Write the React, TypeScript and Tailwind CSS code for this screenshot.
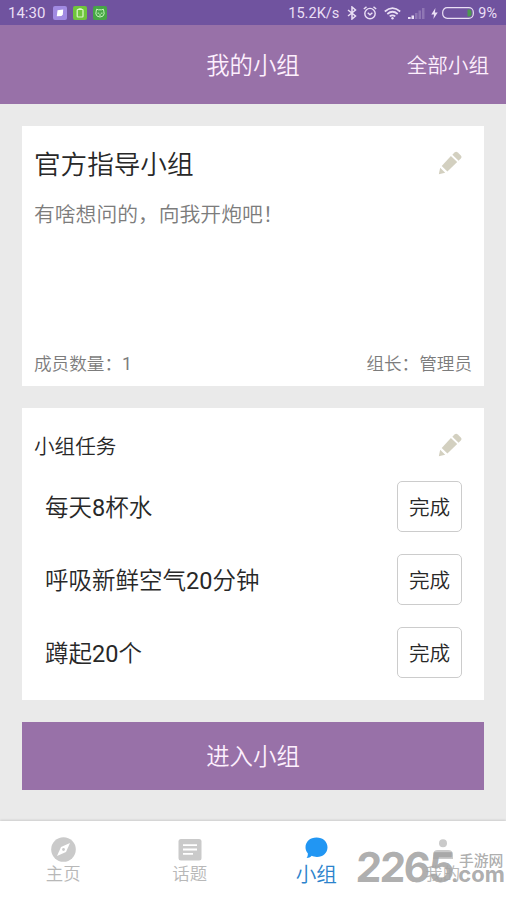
import type { ReactNode } from 'react';

const tasks = ['每天8杯水', '呼吸新鲜空气20分钟', '蹲起20个'];

// Digits use Roboto, the rest stays in the CJK face
function MixedText({ text }: { text: string }) {
  return (
    <>
      {text.split(/(\d+)/).map((part, index) =>
        /^\d+$/.test(part) ? (
          <span key={index} className="font-[Roboto,sans-serif] font-normal">
            {part}
          </span>
        ) : (
          part
        )
      )}
    </>
  );
}

function PencilIcon() {
  return (
    <svg className="h-6 w-6" viewBox="0 0 24 24" fill="#d3d0c0">
      <path d="M.8 23.2L2.2 16.8L7.2 21.8Z" />
      <path d="M3.7 14.9L12.9 5L19.2 11L9.4 20.6Z" />
      <path d="M14.4 3.7L16.7 1.3Q18.3 0 19.8 1.4L22.8 4.4Q24.2 6 22.8 7.5L20.6 9.7Z" />
    </svg>
  );
}

function StatusBar() {
  return (
    <div className="flex h-[25px] shrink-0 items-center bg-[#70539f] pl-2 pr-[9px] pt-px font-[Roboto,'Noto_Sans',sans-serif] text-[15px] font-normal text-[#eadff5]">
      <span className="w-[45px] whitespace-nowrap">14:30</span>
      <div className="flex gap-[6px]">
        <svg className="h-[14px] w-[14px]" viewBox="0 0 14 14">
          <rect width="14" height="14" rx="2" fill="#a18ae2" />
          <path d="M4.5 4.2L10.2 3.6L9.8 8.5L8.5 10L3.8 10.2Z" fill="#fff" />
        </svg>
        <svg className="h-[14px] w-[14px]" viewBox="0 0 14 14">
          <rect width="14" height="14" rx="2" fill="#6fc53c" />
          <rect x="4.2" y="3.5" width="5.8" height="7.5" rx=".8" fill="none" stroke="#dcf8c8" strokeWidth="1.2" />
          <path d="M5.5 3H8.7" stroke="#dcf8c8" strokeWidth="1.5" />
        </svg>
        <svg className="h-[14px] w-[14px]" viewBox="0 0 14 14" fill="none" stroke="#c8f5bd">
          <rect width="14" height="14" rx="2" fill="#46a546" stroke="none" />
          <path d="M3.2 5.2L3.6 3.2L5.4 3.8H8.6L10.4 3.2L10.8 5.2Q12 8 9.8 10.2Q7 11.8 4.2 10.2Q2 8 3.2 5.2Z" />
          <path d="M4.5 7.2H6.2M7.8 7.2H9.5M6 9H8" />
        </svg>
      </div>
      <span className="ml-auto mr-[8px] whitespace-nowrap pt-[2px] text-[14.6px]">15.2K/s</span>
      <svg className="mr-[6px] h-[14px] w-[10px]" viewBox="0 0 10 14" fill="none" stroke="currentColor" strokeWidth="1.5">
        <path d="M1 4L8.5 10L5 13V1L8.5 4L1 10" />
      </svg>
      <svg className="mr-[7px] h-[14px] w-[14px]" viewBox="0 0 14 14" fill="none" stroke="currentColor" strokeWidth="1.4">
        <circle cx="7" cy="7.6" r="5.2" />
        <path d="M.8 3L3.5.9M13.2 3L10.5.9M4.7 6.7L7 8.8L9.4 6.7" />
      </svg>
      <svg className="mr-[7px] h-[13px] w-[17px]" viewBox="0 0 17 13" fill="none" stroke="currentColor" strokeWidth="1.7">
        <path d="M.8 4.5Q8.5-2.3 16.2 4.5M3.3 7Q8.5 2.5 13.7 7M5.7 9.4Q8.5 7.2 11.3 9.4" />
        <circle cx="8.5" cy="11.3" r="1.2" fill="currentColor" stroke="none" />
      </svg>
      <svg className="mr-[6px] h-[12px] w-[17px]" viewBox="0 0 17 12" fill="currentColor">
        <path d="M0 10H2.6V12H0ZM3.5 8.5H6V12H3.5Z" />
        <path d="M7 6H9.5V12H7ZM10.5 3.5H13V12H10.5ZM14 1H16.5V12H14Z" opacity=".25" />
      </svg>
      <svg className="mr-[4px] h-[11px] w-[7px]" viewBox="0 0 7 12" fill="currentColor">
        <path d="M4.5 0L0 7H3L2.3 12L7 4.9H4Z" />
      </svg>
      <svg className="mr-[4px] h-[12px] w-[32px]" viewBox="0 0 32 12">
        <rect x=".7" y=".7" width="30.6" height="10.6" rx="4.5" fill="none" stroke="currentColor" strokeWidth="1.2" />
        <path d="M25.5 2.5H27Q29.5 2.5 29.5 5V7Q29.5 9.5 27 9.5H25.5Z" fill="#4c9950" />
      </svg>
      <span className="pt-[2px] text-[14.4px]">9%</span>
    </div>
  );
}

function Tab({ icon, label, active = false }: { icon: ReactNode; label: string; active?: boolean }) {
  return (
    <div className={`flex flex-1 flex-col items-center pt-[14px] ${active ? 'text-[#2196f3]' : 'text-[#cacaca]'}`}>
      <div className="flex h-[26px] items-center">{icon}</div>
      <span className={active ? 'text-[20.6px] leading-[24px] text-[#2b83cc]' : 'text-[17.4px] leading-[24px] text-[#b8b8b8]'}>
        {label}
      </span>
    </div>
  );
}

export default function App() {
  return (
    <div className="relative flex h-[900px] w-[506px] flex-col overflow-hidden bg-[#eaeaea] font-['Noto_Sans_CJK_SC',sans-serif] font-[350] text-[#282828]">
      <StatusBar />

      <header className="grid h-[79px] shrink-0 grid-cols-3 items-center bg-[#9871a8] text-[#fdeffd]">
        <h1 className="col-start-2 text-center text-[23.4px]">我的小组</h1>
        <span className="pr-[17px] text-right text-[20.6px]">全部小组</span>
      </header>

      <main className="flex flex-1 flex-col px-[22px] pt-[22px]">
        {/* Group info */}
        <section className="flex h-[260px] flex-col bg-white px-3">
          <div className="mt-[17px] flex h-10 items-center justify-between">
            <h2 className="text-[26.6px]">官方指导小组</h2>
            <div className="mr-[10px]">
              <PencilIcon />
            </div>
          </div>
          <p className="mt-[15px] text-[20.8px] leading-[30px] text-[#7c7c7c]">有啥想问的，向我开炮吧！</p>
          <div className="mb-[9px] mt-auto flex justify-between text-[17.6px] leading-[26px] text-[#7c7c7c]">
            <span>
              <MixedText text="成员数量：1" />
            </span>
            <span>组长：管理员</span>
          </div>
        </section>

        {/* Group tasks */}
        <section className="mt-[22px] h-[292px] bg-white px-3 pt-[22px]">
          <div className="flex h-[30px] items-center justify-between">
            <h2 className="text-[20.6px]">小组任务</h2>
            <div className="mr-[10px]">
              <PencilIcon />
            </div>
          </div>
          <ul className="mt-[21px] flex flex-col gap-[22px] pl-[11px] pr-[10px]">
            {tasks.map((task) => (
              <li key={task} className="flex h-[51px] items-center justify-between">
                <span className="text-[23.5px] leading-[36px]">
                  <MixedText text={task} />
                </span>
                <button className="h-[51px] w-[65px] rounded-[5px] border border-[#ccc] text-[20.6px]">完成</button>
              </li>
            ))}
          </ul>
        </section>

        <button className="mt-[22px] h-[68px] bg-[#9871a8] text-[23.4px] text-[#fdeffd]">进入小组</button>
      </main>

      <nav className="flex h-[79px] shrink-0 bg-white shadow-[0_-1px_2px_rgba(0,0,0,0.12)]">
        <Tab
          label="主页"
          icon={
            <svg className="mt-0.5 h-[25px] w-[25px]" viewBox="0 0 25 25">
              <circle cx="12.5" cy="12.5" r="12.3" fill="currentColor" />
              <path d="M19 6L15 15L6 19L10 10Z" fill="#fff" />
              <circle cx="12.5" cy="12.5" r="1.4" fill="currentColor" />
            </svg>
          }
        />
        <Tab
          label="话题"
          icon={
            <svg className="mt-1 h-[22px] w-[24px]" viewBox="0 0 24 22">
              <rect x=".5" width="23" height="21.5" rx="2.5" fill="currentColor" />
              <path d="M5 6.2H19M5 10.5H19M5 14.8H15" stroke="#fff" strokeWidth="1.8" />
            </svg>
          }
        />
        <Tab
          active
          label="小组"
          icon={
            <svg className="h-[22px] w-[23px]" viewBox="0 0 23 22">
              <path
                d="M11.5.5C18 .5 22.5 4.7 22.5 10.3C22.5 16 18 20 12 20C9.8 20 8 19.5 6.8 18.8C5.3 20.4 3.6 21 1.6 21C2.5 20 3 18.5 2.8 16.3C1.3 14.6.5 12.7.5 10.3C.5 4.7 5 .5 11.5.5Z"
                fill="currentColor"
              />
            </svg>
          }
        />
        <Tab
          label="我的"
          icon={
            <svg className="mt-1 h-[22px] w-[22px]" viewBox="0 0 22 22" fill="currentColor">
              <circle cx="11" cy="4.2" r="4" />
              <path d="M1 20V16Q1 11 6 11H16Q21 11 21 16V20Z" />
            </svg>
          }
        />
      </nav>

      {/* Site watermark over the tab bar */}
      <div className="absolute left-[356px] top-[845px] flex h-[44px] w-[150px] text-[#a4a4a4]/90">
        <span className="w-[96px] -skew-x-3 whitespace-nowrap font-[Inter,sans-serif] text-[41px] font-bold leading-[44px] tracking-[-1.9px]">
          2265
        </span>
        <div className="flex flex-col pl-[2px] pt-[7px]">
          <span className="pl-[5px] text-[14.8px] font-medium leading-[16px]">手游网</span>
          <span className="-ml-[3px] -mt-[2px] font-[Inter,sans-serif] text-[22px] font-bold leading-[16px]">.com</span>
        </div>
      </div>
    </div>
  );
}
